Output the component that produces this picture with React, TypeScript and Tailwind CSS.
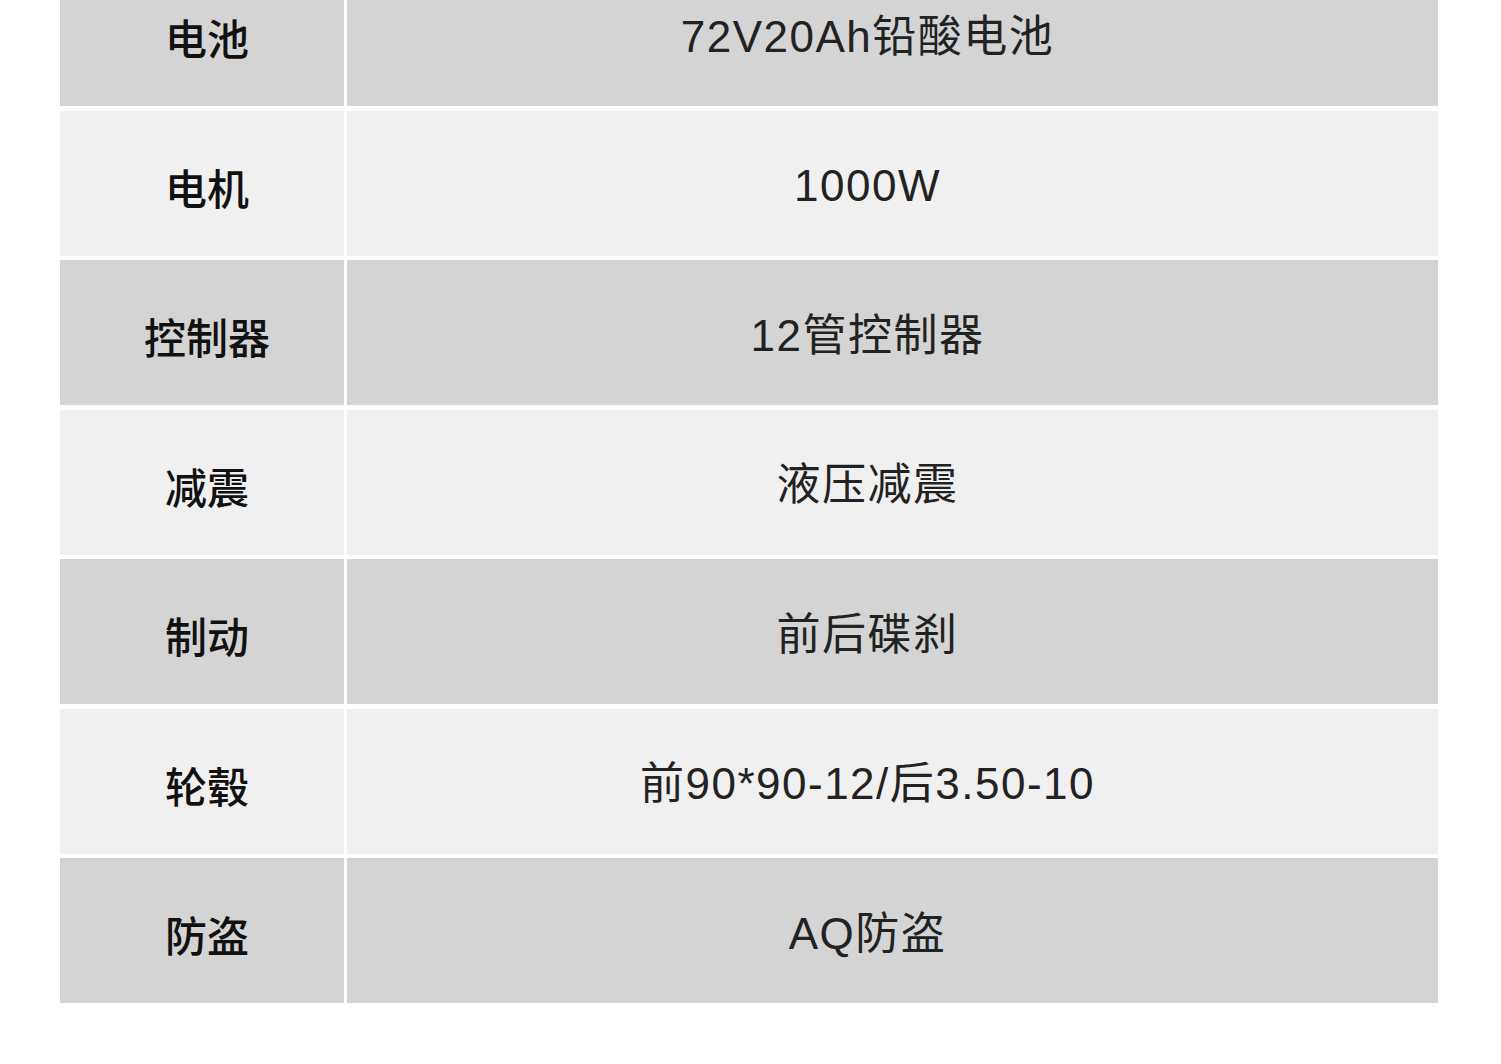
const ROWS: [string, string][] = [
  ['电池', '72V20Ah铅酸电池'],
  ['电机', '1000W'],
  ['控制器', '12管控制器'],
  ['减震', '液压减震'],
  ['制动', '前后碟刹'],
  ['轮毂', '前90*90-12/后3.50-10'],
  ['防盗', 'AQ防盗'],
];

export default function App() {
  return (
    <div
      className="w-[1501px] h-[1064px] overflow-hidden bg-white"
      style={{ fontFamily: '"Noto Sans CJK SC", "Noto Sans", sans-serif' }}
    >
      <div className="mt-[-39px] ml-[60px] w-[1378px] flex flex-col gap-[4.5px]">
        {ROWS.map(([label, value], i) => {
          const bg = i % 2 === 0 ? 'bg-[#d4d4d4]' : 'bg-[#f0f0f0]';
          return (
            <div key={label} className="flex h-[145px] gap-[3px]">
              <div
                className={`${bg} w-[284px] shrink-0 flex items-center justify-center pl-[10px] pt-[6px] text-[42px] font-medium text-[#111]`}
              >
                {label}
              </div>
              <div
                className={`${bg} flex-1 flex items-center justify-center pr-[50px] pt-[6px] text-[44px] tracking-[1.5px] font-normal text-[#222] font-['Liberation_Sans','Noto_Sans_CJK_SC',sans-serif]`}
              >
                {value}
              </div>
            </div>
          );
        })}
      </div>
    </div>
  );
}
